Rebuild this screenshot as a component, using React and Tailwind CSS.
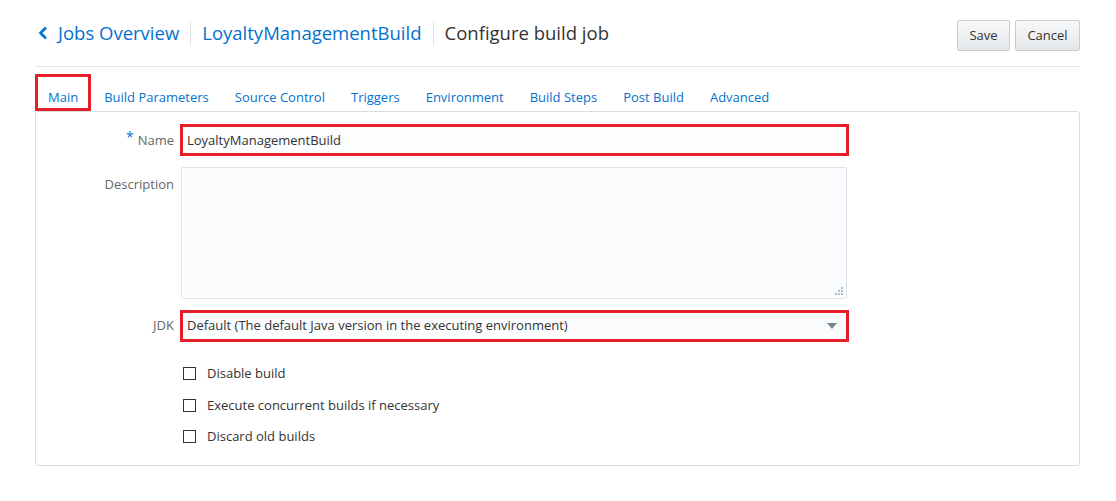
import React from "react";

const font = { fontFamily: '"Open Sans", "Noto Sans", sans-serif' };

function Checkbox({ label }) {
  return (
    <div className="flex items-center h-[31.5px]">
      <div className="w-[13px] h-[13px] border border-[#333] bg-white ml-[3px]" />
      <span className="ml-[11px] text-[13px] text-[#333]">{label}</span>
    </div>
  );
}

export default function App() {
  const tabs = ["Main", "Build Parameters", "Source Control", "Triggers", "Environment", "Build Steps", "Post Build", "Advanced"];
  return (
    <div className="bg-white w-[1116px] h-[501px] pl-[35px] pr-[36px] pt-[20px]" style={font}>
      <div className="flex justify-between items-start border-b border-[#dfe4ea] pb-[15px]">
        <div className="flex items-center h-[26px]">
          <svg width="10" height="14" viewBox="0 0 10 14" className="ml-[3px] mr-[10px]">
            <path d="M8 1.5 L2.5 7 L8 12.5" fill="none" stroke="#0572ce" strokeWidth="2.6" />
          </svg>
          <span className="text-[18.5px] text-[#0572ce] leading-none">Jobs Overview</span>
          <div className="w-px h-[24px] bg-[#dfe4ea] mx-[11px]" />
          <span className="text-[18.5px] text-[#0572ce] leading-none">LoyaltyManagementBuild</span>
          <div className="w-px h-[24px] bg-[#dfe4ea] mx-[11px]" />
          <span className="text-[18.5px] text-[#333] leading-none">Configure build job</span>
        </div>
        <div className="flex gap-[5px]">
          <button className="h-[31px] w-[53px] border border-[#c4ced7] rounded-[2px] bg-gradient-to-b from-[#f7f8f9] to-[#e4e8ea] text-[13px] text-[#333]">Save</button>
          <button className="h-[31px] w-[65px] border border-[#c4ced7] rounded-[2px] bg-gradient-to-b from-[#f7f8f9] to-[#e4e8ea] text-[13px] text-[#333]">Cancel</button>
        </div>
      </div>

      <div className="flex mt-[7px] h-[37px]">
        {tabs.map((t, i) => (
          <div
            key={t}
            className={
              "px-[13px] flex items-center pt-[10px] text-[13px] text-[#0572ce] " +
              (i === 0 ? "outline-3 outline-[#e61e2a] -outline-offset-3" : "")
            }
          >
            {t}
          </div>
        ))}
      </div>

      <div className="border border-[#d6dfe6] rounded-[3px] pt-[12px] h-[355px]">
        <div className="flex items-center">
          <div className="w-[138px] text-right text-[13px] text-[#666]">
            <span className="text-[#0572ce] text-[14px] mr-[4px] relative top-[-3px]">*</span>Name
          </div>
          <div className="ml-[6px] w-[669px] h-[32px] border-[3px] border-[#e61e2a] bg-[#fcfdfe] flex items-center pl-[4px] pt-[1px] text-[13px] text-[#333]">
            LoyaltyManagementBuild
          </div>
        </div>

        <div className="flex mt-[11px]">
          <div className="w-[138px] text-right text-[13px] text-[#666] pt-[8px]">Description</div>
          <div className="ml-[7px] w-[666px] h-[132px] border border-[#dfe4ea] bg-[#fbfcfd] rounded-[2px] relative">
            <svg width="8" height="8" viewBox="0 0 8 8" className="absolute right-[3px] bottom-[3px]">
              <rect x="6" y="0" width="2" height="2" fill="#b4bcc4" />
              <rect x="3" y="3" width="2" height="2" fill="#b4bcc4" />
              <rect x="6" y="3" width="2" height="2" fill="#b4bcc4" />
              <rect x="0" y="6" width="2" height="2" fill="#b4bcc4" />
              <rect x="3" y="6" width="2" height="2" fill="#b4bcc4" />
              <rect x="6" y="6" width="2" height="2" fill="#b4bcc4" />
            </svg>
          </div>
        </div>

        <div className="flex items-center mt-[11px]">
          <div className="w-[138px] text-right text-[13px] text-[#666]">JDK</div>
          <div className="ml-[6px] w-[669px] h-[32px] border-[3px] border-[#e61e2a] bg-[#fbfcfe] flex items-center justify-between pl-[4px] pr-[9px] text-[13px] text-[#333]">
            <span>Default (The default Java version in the executing environment)</span>
            <svg width="10" height="6" viewBox="0 0 10 6">
              <path d="M0 0 L10 0 L5 6 Z" fill="#7a828a" />
            </svg>
          </div>
        </div>

        <div className="ml-[144px] mt-[16px] flex flex-col">
          <Checkbox label="Disable build" />
          <Checkbox label="Execute concurrent builds if necessary" />
          <Checkbox label="Discard old builds" />
        </div>
      </div>
    </div>
  );
}
